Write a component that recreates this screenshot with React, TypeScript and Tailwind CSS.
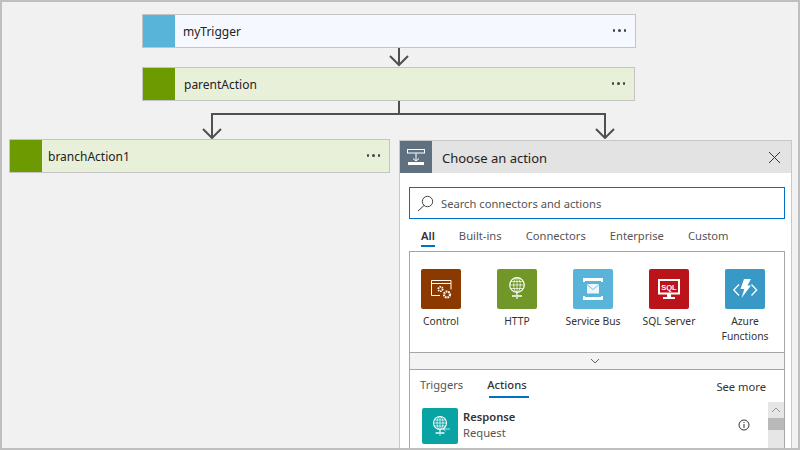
import React from 'react';

const GlobeIcon = () => (
  <svg width="40" height="40" viewBox="0 0 40 40" fill="none" stroke="#fff" strokeWidth="0.700">
    <circle cx="20" cy="16" r="7.300" strokeWidth="1.200" />
    <ellipse cx="20" cy="16" rx="3.300" ry="7.300" />
    <path d="M13 16h14M14 12.500h12M14 19.500h12M20 8.700v14.600" />
    <path d="M20 23.500v3" strokeWidth="1.200" />
    <path d="M15 27h10" strokeWidth="1.500" />
    <path d="M20 28v2" strokeWidth="1.200" />
  </svg>
);

const ResponseIcon = () => (
  <svg width="36" height="36" viewBox="0 0 36 36" fill="none" stroke="#fff" strokeWidth="0.700">
    <circle cx="18" cy="15" r="6.500" strokeWidth="1.100" />
    <ellipse cx="18" cy="15" rx="3" ry="6.500" />
    <path d="M11.500 15h13M12.500 12h11M12.500 18h11M18 8.500v13" />
    <path d="M18 21.500v3" strokeWidth="1.200" />
    <path d="M13.500 25h9" strokeWidth="1.400" />
    <path d="M18 26v2" />
    <path d="M21 21h7M23.500 19l-2.500 2 2.500 2" />
  </svg>
);

const tiles = [
  {
    label: ['Control'],
    color: 'bg-[#8c3900]',
    icon: (
      <svg width="40" height="40" viewBox="0 0 40 40" fill="none" stroke="#fff">
        <path d="M19 26.500h-8.500v-15h19.500v9" strokeWidth="1" />
        <path d="M10.500 14.500h19.500" strokeWidth="1" />
        <circle cx="19.500" cy="20" r="2.200" strokeWidth="1.800" strokeDasharray="1.400 0.700" />
        <circle cx="26" cy="25.500" r="3" strokeWidth="2.200" strokeDasharray="1.700 0.800" />
      </svg>
    ),
  },
  { label: ['HTTP'], color: 'bg-[#709727]', icon: <GlobeIcon /> },
  {
    label: ['Service Bus'],
    color: 'bg-[#59b4d9]',
    icon: (
      <svg width="40" height="40" viewBox="0 0 40 40" fill="#fff">
        <path d="M10 9h20v4h-2v-1H12v1h-2zM10 31h20v-4h-2v1H12v-1h-2z" />
        <rect x="14" y="15" width="12" height="9.500" opacity="0.9" />
        <path d="M14 15.500l6 5 6-5" fill="none" stroke="#59b4d9" strokeWidth="0.800" />
      </svg>
    ),
  },
  {
    label: ['SQL Server'],
    color: 'bg-[#ba141a]',
    icon: (
      <svg width="40" height="40" viewBox="0 0 40 40">
        <rect x="9" y="10" width="22" height="15.500" fill="#fff" />
        <rect x="11" y="12" width="18" height="11.500" fill="#ba141a" />
        <path d="M18 25h4v3h4v2H14v-2h4z" fill="#fff" />
        <text x="20" y="20.500" textAnchor="middle" fill="#fff" fontSize="7.500" fontWeight="700" fontFamily="'Liberation Sans', sans-serif">SQL</text>
      </svg>
    ),
  },
  {
    label: ['Azure', 'Functions'],
    color: 'bg-[#3999c6]',
    icon: (
      <svg width="40" height="40" viewBox="0 0 40 40" fill="none">
        <path d="M14 15.500L8.800 21l5.200 5.500M26.500 15.500L31.700 21l-5.200 5.500" stroke="#fff" strokeWidth="1.300" />
        <path d="M19 10h7l-3.500 6.500H26L16.500 29l2.800-9H15.500z" fill="#fff" />
      </svg>
    ),
  },
];

function Card({ stripe, bg, name, width, nameClass }: { stripe: string; bg: string; name: string; width: string; nameClass: string }) {
  return (
    <div className={`flex h-[34px] shrink-0 items-stretch border border-[#c4c4c4] ${stripe} ${width}`}>
      <div className="w-8 shrink-0" />
      <div className={`flex flex-1 items-center justify-between ${bg}`}>
        <span className={`pt-[2px] text-[12px] text-[#222] ${nameClass}`}>{name}</span>
        <span className="mr-[9px] mb-px flex gap-[3px]">
          <i className="h-[2.500px] w-[2.500px] rounded-full bg-[#444]" />
          <i className="h-[2.500px] w-[2.500px] rounded-full bg-[#444]" />
          <i className="h-[2.500px] w-[2.500px] rounded-full bg-[#444]" />
        </span>
      </div>
    </div>
  );
}

export default function App() {
  return (
    <div className="flex h-[450px] w-[800px] flex-col overflow-hidden border-2 border-[#bfbfbf] bg-[#f1f1f1] font-['Noto_Sans',sans-serif]">
      <div className="ml-[140px] mt-3">
        <Card stripe="bg-[#59b4d9]" bg="bg-[#f6f8ff]" name="myTrigger" width="w-[494px]" nameClass="ml-2" />
      </div>

      {/* arrow between trigger and action */}
      <svg className="shrink-0" width="796" height="19" fill="none" stroke="#505050" strokeWidth="2">
        <path d="M397 0v17M388 8l9 9 9-9" />
      </svg>

      <div className="ml-[140px]">
        <Card stripe="bg-[#6c9a00]" bg="bg-[#e9f0da]" name="parentAction" width="w-[493px]" nameClass="ml-[9px]" />
      </div>

      {/* branch connector */}
      <svg className="shrink-0" width="796" height="38" fill="none" stroke="#505050" strokeWidth="2">
        <path d="M397 0v13M210 37V13h393v24" />
        <path d="M201 28l9 9 9-9M594 28l9 9 9-9" />
      </svg>

      <div className="flex min-h-0 flex-1 items-start gap-[9px] pl-[7px]">
        <Card stripe="bg-[#6c9a00]" bg="bg-[#e9f0da]" name="branchAction1" width="w-[381px]" nameClass="ml-[6px]" />

        <div className="mt-px flex h-[400px] w-[393px] shrink-0 flex-col border border-[#c8c8c8] bg-white">
          <div className="flex h-8 shrink-0 items-center bg-[#e3e3e3]">
            <div className="flex h-8 w-8 items-center justify-center bg-[#5f7080]">
              <svg width="18" height="16" viewBox="0 0 18 16" fill="none" stroke="#fff">
                <rect x="0.500" y="0.500" width="17" height="3.500" />
                <path d="M9 4v8M6 9.500l3 2.500 3-2.500" />
                <rect x="1" y="13" width="16" height="3" fill="#fff" stroke="none" />
              </svg>
            </div>
            <span className="ml-[10px] pt-[3px] text-[13px] text-[#222]">Choose an action</span>
            <svg className="ml-auto mr-[10px]" width="13" height="13" viewBox="0 0 13 13" stroke="#333" strokeWidth="1">
              <path d="M1 1l11 11M12 1L1 12" />
            </svg>
          </div>

          <div className="flex min-h-0 flex-1 flex-col pl-[9px] pr-[6px] pt-[14px]">
            <div className="flex h-8 shrink-0 items-center border border-[#0072c6]">
              <svg className="ml-[7px]" width="17" height="17" viewBox="0 0 17 17" fill="none" stroke="#444" strokeWidth="1">
                <circle cx="10.500" cy="6.500" r="5.200" />
                <path d="M7 10.500L1 16" />
              </svg>
              <span className="ml-[7px] text-[11.200px] leading-[17px] text-[#555]">Search connectors and actions</span>
            </div>

            <div className="mt-2 flex shrink-0 gap-6 pl-3 text-[11.200px] leading-[17px] text-[#555]">
              <span className="border-b-2 border-[#0072c6] pb-px font-semibold text-[#333]">All</span>
              <span>Built-ins</span>
              <span>Connectors</span>
              <span>Enterprise</span>
              <span>Custom</span>
            </div>

            <div className="mt-1 flex min-h-0 flex-1 flex-col border-x border-t border-[#a6a6a6]">
              <div className="flex h-[100px] shrink-0 gap-9 pl-[11px] pt-[17px]">
                {tiles.map((tile) => (
                  <div key={tile.label[0]} className="flex w-10 flex-col items-center">
                    <div className={`flex h-10 w-10 items-center justify-center rounded-[2px] ${tile.color}`}>{tile.icon}</div>
                    <div className="mt-[5px] whitespace-nowrap text-center text-[10.300px] leading-[15px] text-[#333]">
                      {tile.label.map((line) => (
                        <div key={line}>{line}</div>
                      ))}
                    </div>
                  </div>
                ))}
              </div>

              <div className="flex h-[18px] shrink-0 items-center justify-center border-y border-[#a6a6a6] bg-[#f3f3f3] pr-[4px]">
                <svg width="10" height="6" viewBox="0 0 10 6" fill="none" stroke="#666">
                  <path d="M1 1l4 4 4-4" />
                </svg>
              </div>

              <div className="flex h-8 shrink-0 items-start pl-[10px] pr-[18px] pt-[6px] text-[11.200px] leading-[17px]">
                <span className="text-[#555]">Triggers</span>
                <span className="ml-[26px] w-10 border-b-2 border-[#0072c6] pb-[3px] font-medium text-[#333]">
                  <span className="-ml-[2px] block">Actions</span>
                </span>
                <span className="ml-auto mt-[2px] text-[#333]">See more</span>
              </div>

              <div className="flex min-h-0 flex-1">
                <div className="flex flex-1 items-start pl-3 pt-[6px]">
                  <div className="h-9 w-9 shrink-0 rounded-[2px] bg-[#09a3a3]">
                    <ResponseIcon />
                  </div>
                  <div className="ml-[5px] mt-px text-[11.200px] leading-[16px]">
                    <div className="font-semibold text-[#333]">Response</div>
                    <div className="text-[#555]">Request</div>
                  </div>
                  <svg className="ml-auto mr-[18px] mt-[11px]" width="12" height="12" viewBox="0 0 12 12" fill="none" stroke="#333">
                    <circle cx="6" cy="6" r="5" />
                    <path d="M6 5v4M6 3v1" />
                  </svg>
                </div>
                <div className="flex w-4 shrink-0 flex-col bg-[#e6e6e6]">
                  <div className="flex h-4 items-center justify-center">
                    <svg width="10" height="6" viewBox="0 0 10 6" fill="none" stroke="#999">
                      <path d="M1 5l4-4 4 4" />
                    </svg>
                  </div>
                  <div className="h-3 bg-[#b9b9b9]" />
                </div>
              </div>
            </div>
          </div>
        </div>
      </div>
    </div>
  );
}
